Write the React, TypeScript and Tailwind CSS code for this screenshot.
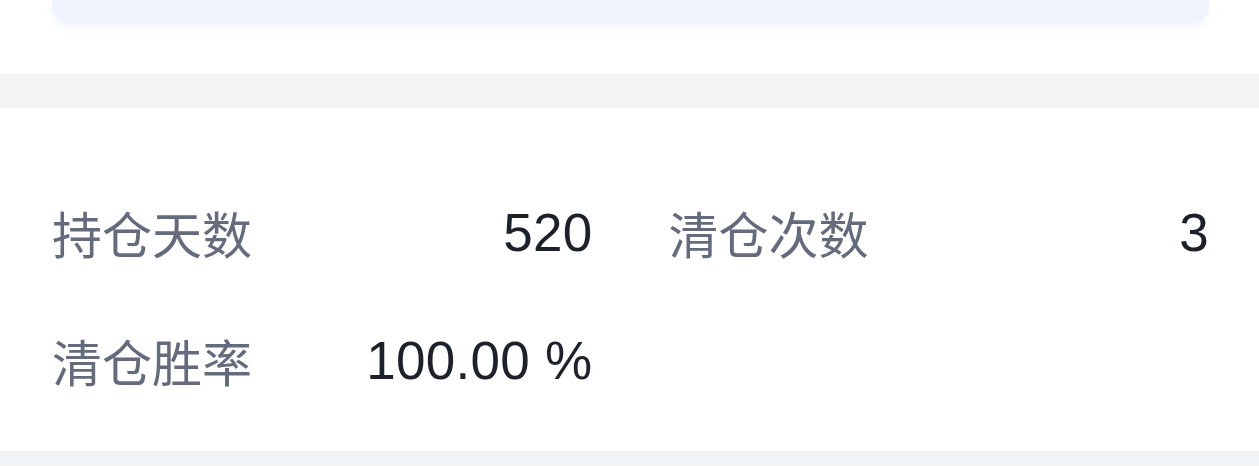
import React from 'react';

/**
 * PositionStats - clearance stats block under the summary card
 */
const stats = [
  { label: '持仓天数', value: '520' },
  { label: '清仓次数', value: '3' },
  { label: '清仓胜率', value: '100.00 %' },
];

export default function App() {
  return (
    <div className="w-[1259px] h-[466px] bg-white overflow-hidden font-['Liberation_Sans','Noto_Sans_CJK_SC',sans-serif]">
      {/* bottom of the summary card above */}
      <div className="h-[74px] bg-white pl-[52px] pr-[50px]">
        <div className="h-[24px] bg-[#eef3fd] rounded-b-[18px] shadow-[0_6px_10px_rgba(230,235,245,0.35)]" />
      </div>

      <div className="h-[34px] bg-[#f3f4f6]" />

      {/* stats grid */}
      <div className="h-[343px] bg-white pl-[52px] pr-[50px] pt-[92px]">
        <div className="grid grid-cols-2 gap-x-[76px] gap-y-[64px]">
          {stats.map(s => (
            <div key={s.label} className="flex items-center justify-between h-[64px]">
              <span className="text-[50px] leading-none text-[#646b7d] font-['Noto_Sans_CJK_SC',sans-serif]">
                {s.label}
              </span>
              <span className="text-[53px] leading-none text-[#1d2129] tracking-[0.3px]">
                {s.value}
              </span>
            </div>
          ))}
        </div>
      </div>

      <div className="h-[15px] bg-[#f3f4f6]" />
    </div>
  );
}
